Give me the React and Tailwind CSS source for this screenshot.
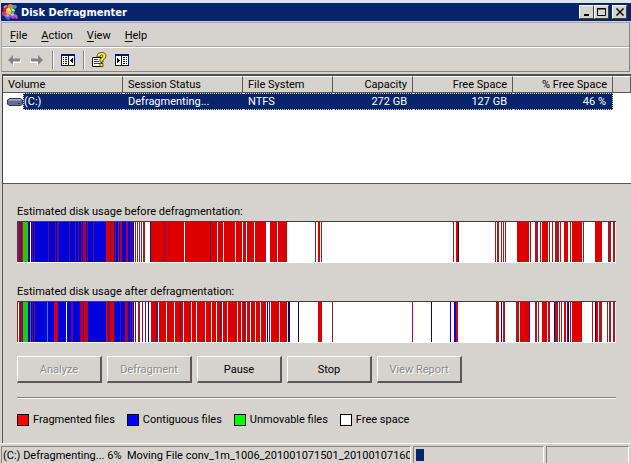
import React from "react";

const RED = "#dc0000";
const DARK = "#a8181c";
const BLUE = "#0000dc";
const NAVY = "#14006e";
const PURPLE = "#5c1070";
const GREEN = "#1ccc1c";
const WHITE = "#ffffff";

// Each run is [start, end, colour] along a strip of 599 units; unlisted parts are free space.
const BEFORE = [
  [0, 2, "#583060"], [2, 4, "#a00030"], [4, 5, PURPLE], [5, 6, RED], [6, 11, GREEN], [11, 12, NAVY],
  [12, 13, BLUE], [14, 117, BLUE],
  [15, 16, PURPLE], [17, 18, PURPLE], [31, 32, PURPLE], [38, 39, PURPLE], [40, 42, PURPLE],
  [52, 53, PURPLE], [58, 59, PURPLE], [61, 62, PURPLE], [64, 65, PURPLE], [66, 69, "#b00030"],
  [70, 71, PURPLE], [76, 77, PURPLE], [89, 93, RED], [93, 94, PURPLE], [94, 97, RED],
  [98, 99, PURPLE], [101, 102, DARK], [103, 105, "#b00030"], [109, 111, "#b00030"], [113, 114, PURPLE], [115, 116, PURPLE],
  [118, 119, DARK], [120, 121, DARK], [122, 123, DARK], [124, 125, DARK], [126, 128, DARK],
  [133, 134, NAVY], [134, 270, RED], [147, 148, PURPLE], [167, 168, WHITE], [193, 194, PURPLE],
  [200, 201, WHITE], [206, 207, WHITE], [218, 219, WHITE], [225, 226, WHITE], [229, 230, WHITE],
  [237, 238, WHITE], [249, 253, WHITE], [260, 261, WHITE],
  [298, 299, DARK], [301, 303, RED], [304, 305, DARK], [436, 437, DARK], [439, 441, RED], [441, 442, NAVY],
  [478, 479, DARK], [480, 482, DARK], [484, 485, DARK], [486, 487, DARK], [488, 489, DARK],
  [500, 512, RED], [513, 514, DARK], [518, 521, DARK], [523, 524, DARK], [525, 531, RED],
  [532, 533, DARK], [535, 536, DARK], [538, 542, DARK], [543, 544, DARK], [547, 551, RED],
  [553, 554, DARK], [555, 565, RED], [566, 567, DARK], [578, 585, RED], [591, 594, DARK], [596, 598, DARK],
];

const AFTER = [
  [0, 1, DARK], [2, 3, DARK], [3, 4, PURPLE], [4, 5, RED], [5, 6, PURPLE], [6, 11, GREEN], [11, 12, NAVY],
  [12, 117, BLUE], [13, 14, "#408060"], [15, 16, PURPLE], [17, 18, PURPLE],
  [30, 31, "#1090c0"], [37, 41, "#c40028"], [49, 50, WHITE], [54, 56, PURPLE], [63, 66, "#b00030"],
  [66, 67, PURPLE], [67, 71, "#c40028"], [89, 91, RED], [91, 93, PURPLE], [93, 97, RED], [103, 104, PURPLE],
  [108, 111, "#b00030"], [113, 114, PURPLE], [115, 116, DARK],
  [118, 119, PURPLE], [121, 123, DARK], [125, 126, PURPLE], [128, 129, PURPLE], [131, 132, NAVY],
  [134, 270, RED], [139, 141, PURPLE], [141, 142, WHITE], [149, 150, WHITE], [157, 158, WHITE],
  [163, 164, PURPLE], [166, 167, WHITE], [174, 175, WHITE], [179, 180, WHITE], [188, 189, WHITE],
  [194, 195, WHITE], [199, 200, WHITE], [203, 204, PURPLE], [205, 206, WHITE], [210, 211, WHITE],
  [220, 221, WHITE], [224, 225, WHITE], [227, 228, PURPLE], [229, 230, WHITE], [233, 234, WHITE],
  [238, 239, WHITE], [243, 244, WHITE], [249, 250, WHITE], [250, 251, NAVY], [251, 252, WHITE],
  [252, 253, PURPLE], [253, 254, WHITE], [262, 263, WHITE],
  [271, 273, NAVY], [281, 282, NAVY],
  [301, 305, RED], [315, 316, DARK], [395, 396, DARK], [414, 415, NAVY], [433, 434, BLUE], [437, 439, BLUE], [439, 441, RED],
  [479, 482, DARK], [484, 485, NAVY], [486, 488, DARK], [499, 502, DARK], [503, 512, RED], [512, 513, PURPLE],
  [518, 520, DARK], [521, 522, DARK], [525, 530, RED], [531, 533, DARK], [537, 538, NAVY], [538, 541, DARK],
  [542, 543, DARK], [544, 545, DARK], [547, 549, RED], [550, 551, PURPLE], [551, 552, NAVY], [553, 554, DARK],
  [555, 565, RED], [575, 576, DARK], [578, 579, NAVY], [579, 581, RED], [582, 585, DARK],
  [590, 591, DARK], [592, 594, DARK], [596, 598, DARK],
];

function UsageStrip({ title, runs }) {
  return (
    <figure>
      <figcaption className="h-[17px] leading-4">{title}</figcaption>
      <svg
        role="img"
        aria-label={title}
        viewBox="0 0 599 40"
        preserveAspectRatio="none"
        shapeRendering="crispEdges"
        className="block h-[42px] w-full border-b border-t border-b-white border-t-[#404040] bg-white"
      >
        {runs.map(([start, end, fill], i) => (
          <rect key={i} x={start} y="0" width={end - start} height="40" fill={fill} />
        ))}
      </svg>
    </figure>
  );
}

function AppIcon() {
  return (
    <svg viewBox="0 0 16 16" className="size-4" aria-hidden="true">
      <path d="M1 3l3-2 2 1v4l-3 2-2-1z" fill="#d81828" />
      <path d="M1 3l3-2 2 1-3 2z" fill="#ff8080" />
      <path d="M6 1l2-1 3 1v3L8 5 6 4z" fill="#f08820" />
      <path d="M11 1l3 0 1 2-2 2-2-1z" fill="#3898e0" />
      <path d="M0 8l3-1 2 2v3l-2 1-3-2z" fill="#e83058" />
      <path d="M4 5l3-1 2 2v4l-2 1-3-2z" fill="#f0c030" />
      <path d="M4 5l3-1 2 2-3 1z" fill="#fff4a0" />
      <path d="M9 4l3 1 1 2-1 3-3-1z" fill="#38b848" />
      <path d="M9 4l3 1 1 2-3 0z" fill="#a0f090" />
      <path d="M3 11l3-1 2 2v3l-2 1-3-2z" fill="#4060e0" />
      <path d="M3 11l3-1 2 2-3 1z" fill="#90b8ff" />
      <path d="M8 10l3-1 2 2v3l-2 1-3-2z" fill="#a848d0" />
      <path d="M8 10l3-1 2 2-3 1z" fill="#e8a0f8" />
      <path d="M13 10l2 1 1 3-2 1-1-2z" fill="#e85098" />
    </svg>
  );
}

function Arrow({ flip }) {
  return (
    <svg viewBox="0 0 14 12" className={flip ? "h-3 w-3.5 -scale-x-100" : "h-3 w-3.5"} aria-hidden="true">
      <path d="M2 7l5-4v3h7v3H7v3z" fill="#fff" />
      <path d="M1 6l5-5v3.500h7v3H6V11z" fill="#848284" />
    </svg>
  );
}

function PaneIcon({ flip }) {
  return (
    <svg viewBox="0 0 14 12" className={flip ? "h-3 w-3.5 -scale-x-100" : "h-3 w-3.5"} shapeRendering="crispEdges" aria-hidden="true">
      <path d="M0 0h14v12H0z" fill="#10106c" />
      <path d="M1 2h6v9H1zM8 2h5v9H8z" fill="#fff" />
      <path d="M2 3h1v1H2zM4 3h2v1H4zM2 5h1v1H2zM4 5h2v1H4zM2 7h1v1H2zM4 7h2v1H4zM2 9h1v1H2zM4 9h2v1H4z" fill="#10106c" />
      <path d="M9 6h1v1H9zM10 5h1v3h-1zM11 4h1v5h-1z" fill="#000" />
    </svg>
  );
}

function HelpIcon() {
  return (
    <svg viewBox="0 0 15 16" className="h-4 w-[15px]" aria-hidden="true">
      <path d="M.5 5.500h9v9h-9z" fill="#fff" stroke="#000" />
      <path d="M2 7.500h4M2 9.500h5M2 11.500h6" stroke="#404040" />
      <path d="M5 5V3.500Q5.500.5 9.500.5 14 .5 14 4q0 2.500-3 4v2H8V7q3-1.500 3-3 0-1-1.500-1T8 5z" fill="#ffee20" stroke="#383000" strokeWidth=".8" />
      <path d="M8 11.500h3v3H8z" fill="#ffee20" stroke="#383000" strokeWidth=".8" />
    </svg>
  );
}

function DriveIcon() {
  return (
    <svg viewBox="0 0 16 10" className="h-2.5 w-4" aria-hidden="true">
      <path d="M2.500 1.500h11l2 1.500v4L14 8.500H2L.5 7V3z" fill="#686c94" stroke="#303450" />
      <path d="M2.500 2h11l1 1.500h-13z" fill="#a8acc8" />
      <path d="M11 6.500h2" stroke="#303450" />
    </svg>
  );
}

function CaptionButton({ label, children }) {
  return (
    <button aria-label={label} className="flex h-3.5 w-[15px] items-center justify-center border border-b-[#404040] border-l-white border-r-[#404040] border-t-white bg-[#d6d3ce]">
      <svg viewBox="0 0 10 10" className="size-2.5" fill="none" stroke="#000" aria-hidden="true">{children}</svg>
    </button>
  );
}

function PushButton({ children, disabled }) {
  return (
    <button
      disabled={disabled}
      className="h-[27px] w-[85px] border-b-2 border-l border-r-2 border-t border-b-[#585858] border-l-white border-r-[#585858] border-t-white pt-0.5 disabled:text-[#8c8a88] disabled:[text-shadow:1px_1px_0_#fff]"
    >
      {children}
    </button>
  );
}

function Legend({ swatch, children }) {
  return (
    <li className="flex items-center gap-1">
      <span className={"size-3 border border-black " + swatch} />
      {children}
    </li>
  );
}

const MENUS = ["File", "Action", "View", "Help"];
const COLUMNS = [
  ["Volume", "text-left pl-[5px]"],
  ["Session Status", "text-left pl-[5px]"],
  ["File System", "text-left pl-[5px]"],
  ["Capacity", "text-right pr-[5px]"],
  ["Free Space", "text-right pr-[5px]"],
  ["% Free Space", "text-right pr-[5px]"],
  ["", ""],
];

export default function App() {
  return (
    <div className="overflow-hidden whitespace-nowrap bg-[#d6d3ce] font-[Roboto,'Liberation_Sans',sans-serif] text-[11px] leading-[14px] text-black">
      <header className="ml-px flex h-[21px] items-center border-t-[3px] border-[#dde3e8] bg-[#08246b] pl-px pr-1 text-white">
        <AppIcon />
        <h1 className="ml-[3px] flex-1 pt-px font-['DejaVu_Sans_Condensed','DejaVu_Sans',sans-serif] font-bold leading-4">Disk Defragmenter</h1>
        <CaptionButton label="Minimize"><path d="M2 8h5" strokeWidth="2" /></CaptionButton>
        <CaptionButton label="Maximize"><path d="M.5 1.500h8v7h-8zM.5 2h8" /></CaptionButton>
        <span className="w-[3px]" />
        <CaptionButton label="Close"><path d="M1.500 1.500l7 7M8.500 1.500l-7 7" strokeWidth="1.500" /></CaptionButton>
      </header>

      <div className="ml-px mr-px mt-px border border-b-[#848284] border-l-[#a8a6a4] border-r-[#848284] border-t-[#a8a6a4]">
        <nav className="flex h-6 items-center gap-3.5 border-b border-[#a8a6a4] pl-2 pt-0.5">
          {MENUS.map((name) => (
            <button key={name}>
              <span className="underline underline-offset-2">{name[0]}</span>
              {name.slice(1)}
            </button>
          ))}
        </nav>
        <div className="flex h-6 items-center border-t border-white pl-[5px]">
          <button aria-label="Back" disabled><Arrow /></button>
          <button aria-label="Forward" disabled className="ml-[9px]"><Arrow flip /></button>
          <span className="ml-2 h-[18px] w-0.5 border-l border-r border-l-[#848284] border-r-white" />
          <button aria-label="Show or hide tree" className="ml-[7px]"><PaneIcon /></button>
          <span className="ml-2 h-[18px] w-0.5 border-l border-r border-l-[#848284] border-r-white" />
          <button aria-label="Help" className="ml-[7px]"><HelpIcon /></button>
          <button aria-label="Show or hide pane" className="ml-2"><PaneIcon flip /></button>
        </div>
      </div>

      <section className="ml-0.5 mt-[2px] h-[110px] border-b border-l border-t-2 border-b-[#585858] border-l-[#404040] border-t-[#505050] bg-white">
        <table className="w-full table-fixed border-separate border-spacing-0">
          <colgroup>
            <col className="w-[120px]" />
            <col className="w-[120px]" />
            <col className="w-[90px]" />
            <col className="w-[80px]" />
            <col className="w-[100px]" />
            <col className="w-[100px]" />
            <col />
          </colgroup>
          <thead>
            <tr className="h-[17px] bg-[#d6d3ce]">
              {COLUMNS.map(([name, place], i) => (
                <th key={i} scope="col" className={"border-b border-r border-t border-b-[#585858] border-r-[#585858] border-t-white pb-0 pt-px font-normal " + place}>
                  {name}
                </th>
              ))}
            </tr>
          </thead>
          <tbody>
            <tr className="h-[17px] text-white [&>td]:border-y [&>td]:border-dotted [&>td]:border-[#e0d8a0] [&>td]:bg-[#08246b] [&>td]:pb-0 [&>td]:pt-px">
              <th scope="row" className="p-0 text-left font-normal">
                <span className="flex items-center pl-1">
                  <DriveIcon />
                  <span className="h-[17px] flex-1 border-y border-l border-dotted border-[#e0d8a0] bg-[#08246b] leading-4">(C:)</span>
                </span>
              </th>
              <td className="pl-[5px]">Defragmenting...</td>
              <td className="pl-[5px]">NTFS</td>
              <td className="pr-1.5 text-right">272 GB</td>
              <td className="pr-1.5 text-right">127 GB</td>
              <td className="border-r pr-1.5 text-right">46 %</td>
            </tr>
          </tbody>
        </table>
      </section>

      <main className="ml-0.5 border-l border-[#585858] pb-4 pl-3.5 pr-[15px] pt-5">
        <UsageStrip title="Estimated disk usage before defragmentation:" runs={BEFORE} />
        <div className="mt-[21px]">
          <UsageStrip title="Estimated disk usage after defragmentation:" runs={AFTER} />
        </div>
        <div className="mt-[13px] flex gap-[5px]">
          <PushButton disabled>Analyze</PushButton>
          <PushButton disabled>Defragment</PushButton>
          <PushButton>Pause</PushButton>
          <PushButton>Stop</PushButton>
          <PushButton disabled>View Report</PushButton>
        </div>
        <hr className="mt-3.5 h-0.5 border-b border-t border-b-white border-t-[#848284]" />
        <ul className="mt-3.5 flex gap-3">
          <Legend swatch="bg-[#ff0000]">Fragmented files</Legend>
          <Legend swatch="bg-[#0000ff]">Contiguous files</Legend>
          <Legend swatch="bg-[#00ff00]">Unmovable files</Legend>
          <Legend swatch="bg-white">Free space</Legend>
        </ul>
      </main>

      <footer className="flex h-[21px] gap-0.5 border-t border-white pl-px pr-0.5 pt-0.5">
        <div className="min-w-0 flex-1 overflow-hidden border-l border-r border-t border-l-[#848284] border-r-white border-t-[#848284] pl-px leading-[17px]">
          <span className="whitespace-pre">(C:) Defragmenting... 6%  Moving File conv_1m_1006_201001071501_20100107160</span>
        </div>
        <div role="progressbar" aria-label="Defragmentation" aria-valuenow={6} className="w-[131px] border-l border-r border-t border-l-[#848284] border-r-white border-t-[#848284] pl-0.5 pt-0.5">
          <div className="h-3 w-2 bg-[#08246b]" />
        </div>
        <div className="w-[83px] border-l border-r border-t border-l-[#848284] border-r-white border-t-[#848284]" />
      </footer>
    </div>
  );
}
